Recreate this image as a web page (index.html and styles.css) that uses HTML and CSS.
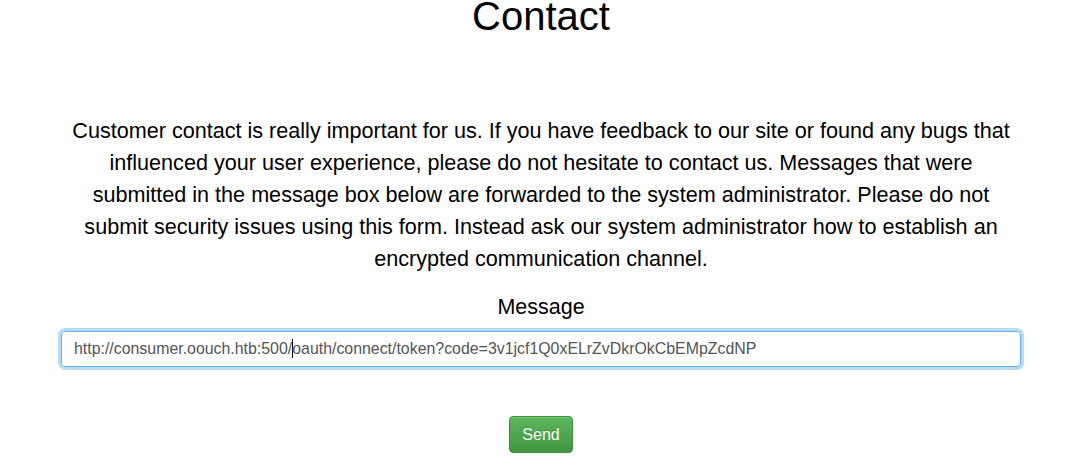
FILE: index.html
```html
<!DOCTYPE html>
<html>
<head>
<meta charset="utf-8">
<link rel="stylesheet" href="styles.css">
</head>
<body>
<div class="page">
  <h1 class="title">Contact</h1>
  <p class="intro">Customer contact is really important for us. If you have feedback to our site or found any bugs that influenced your user experience, please do not hesitate to contact us. Messages that were submitted in the message box below are forwarded to the system administrator. Please do not submit security issues using this form. Instead ask our system administrator how to establish an encrypted communication channel.</p>
  <form class="form">
    <label class="label">Message</label>
    <div class="field">http://consumer.oouch.htb:500/<span class="caret"></span>oauth/connect/token?code=3v1jcf1Q0xELrZvDkrOkCbEMpZcdNP</div>
    <div class="actions"><button type="button" class="btn">Send</button></div>
  </form>
</div>
</body>
</html>
```
FILE: styles.css
```css
html, body {
  margin: 0;
  padding: 0;
  background: #fff;
}
body {
  font-family: "Liberation Sans", Arial, sans-serif;
  color: #000;
}
.page {
  width: 960px;
  margin-left: 61px;
  text-align: center;
}
.title {
  font-size: 40px;
  font-weight: normal;
  line-height: 40px;
  margin: -4px 0 0 0;
}
.intro {
  font-size: 21.6px;
  line-height: 32px;
  margin: 79px 0 0 0;
}
.form {
  display: flex;
  flex-direction: column;
  align-items: stretch;
  margin-top: 16px;
}
.label {
  font-size: 21.5px;
  line-height: 32px;
  display: block;
}
.field {
  margin-top: 8px;
  box-sizing: border-box;
  height: 36px;
  border: 1px solid #66afe9;
  border-radius: 4px;
  box-shadow: 0 0 0 3px rgba(102, 175, 233, 0.45);
  padding: 0 12px;
  font-size: 15.9px;
  line-height: 34px;
  color: #555;
  text-align: left;
  white-space: nowrap;
}
.caret {
  display: inline-block;
  width: 0;
  height: 19px;
  border-left: 1px solid #000;
  vertical-align: -4px;
  margin-right: -1px;
}
.actions {
  margin-top: 49px;
  display: flex;
  justify-content: center;
}
.btn {
  font-family: "Liberation Sans", Arial, sans-serif;
  font-size: 16px;
  color: #fff;
  width: 64px;
  height: 37px;
  border: 1px solid #3e8f3e;
  border-radius: 4px;
  background: linear-gradient(to bottom, #5cb85c 0%, #419641 100%);
  box-shadow: inset 0 1px 0 rgba(255,255,255,0.15);
  padding: 0;
  text-shadow: 0 -1px 0 rgba(0,0,0,0.2);
}
```
